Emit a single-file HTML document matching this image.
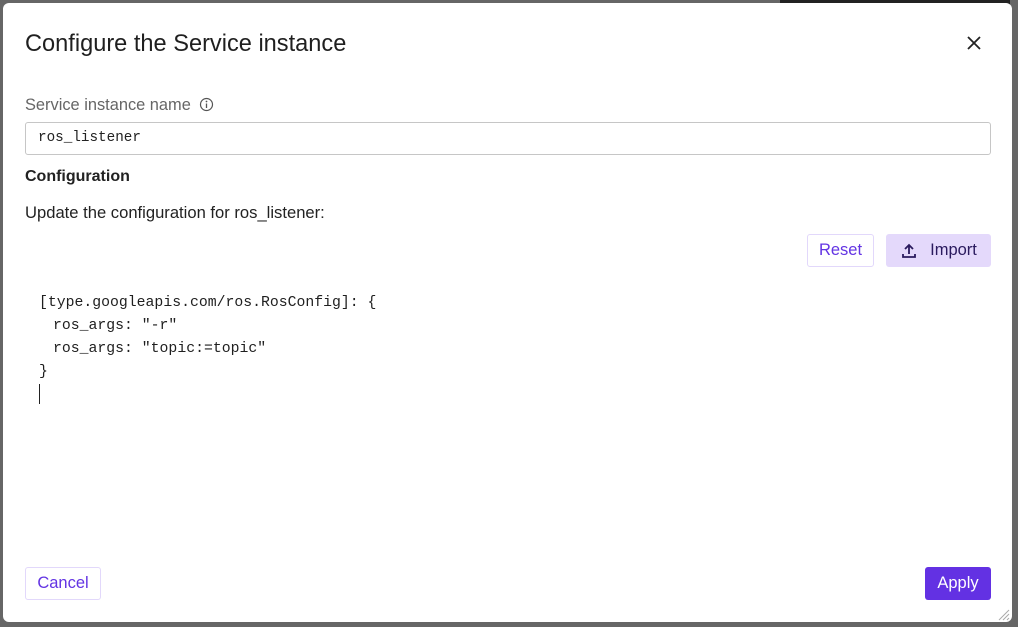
<!DOCTYPE html>
<html><head><meta charset="utf-8"><style>
*{box-sizing:border-box;margin:0;padding:0}
body{width:1018px;height:627px;background:#666;position:relative;overflow:hidden;font-family:"Liberation Sans",sans-serif}
.top{position:absolute;left:780px;top:0;width:230px;height:6px;background:#222}
.dlg{position:absolute;left:3px;top:3px;width:1009px;height:619px;background:#fff;border-radius:6px}
.abs{position:absolute}
.title{left:22px;top:28px;font-size:23.6px;color:#1f1f1f}
.lbl{left:22px;top:93px;font-size:16.4px;color:#666}
.inp{left:22px;top:119px;width:966px;height:33px;border:1px solid #c6c6c6;border-radius:3px;font-family:"Liberation Mono",monospace;font-size:14.3px;color:#222;padding:7px 12px}
.h{left:22px;top:165px;font-size:16px;font-weight:bold;color:#222}
.p{left:22px;top:200px;font-size:16.6px;color:#222}
.btn{height:33px;border-radius:3px;font-size:16.5px;display:flex;align-items:center;justify-content:center}
.code{left:36px;top:289px;font-family:"Liberation Mono",monospace;font-size:14.8px;line-height:23px;color:#1f1f1f;white-space:pre}
.code .i{padding-left:14px}
.caret{left:36px;top:381px;width:1px;height:20px;background:#222}
</style></head><body>
<div class="top"></div>
<div class="dlg">
<div class="abs title">Configure the Service instance</div>
<svg class="abs" style="left:963px;top:32px" width="16" height="16" viewBox="0 0 16 16"><path d="M2 2L14 14M14 2L2 14" stroke="#222" stroke-width="1.8"/></svg>
<div class="abs lbl">Service instance name</div>
<svg class="abs" style="left:196px;top:94px" width="15" height="15" viewBox="0 0 15 15"><circle cx="7.5" cy="7.5" r="6" fill="none" stroke="#555" stroke-width="1.2"/><path d="M7.5 6.5V11" stroke="#555" stroke-width="1.3"/><circle cx="7.5" cy="4.5" r=".9" fill="#555"/></svg>
<div class="abs inp">ros_listener</div>
<div class="abs h">Configuration</div>
<div class="abs p">Update the configuration for ros_listener:</div>
<div class="abs btn" style="left:804px;top:231px;width:67px;border:1px solid #e2d8fb;color:#6334e3">Reset</div>
<div class="abs btn" style="left:883px;top:231px;width:105px;background:#e4d9fb;color:#2a1a5e"><svg width="18" height="18" viewBox="0 0 18 18" style="margin-right:12px"><path d="M9 12V3M5 7l4-4 4 4M3 12v3h12v-3" fill="none" stroke="#2a1a5e" stroke-width="1.8"/></svg>Import</div>
<div class="abs code">[type.googleapis.com/ros.RosConfig]: {
<span class="i">ros_args: "-r"</span>
<span class="i">ros_args: "topic:=topic"</span>
}</div>
<div class="abs caret"></div>
<div class="abs btn" style="left:22px;top:564px;width:76px;border:1px solid #e2d8fb;color:#6334e3">Cancel</div>
<div class="abs btn" style="left:922px;top:564px;width:66px;background:#6331e3;color:#fff">Apply</div>
<svg class="abs" style="left:995px;top:606px" width="12" height="12"><path d="M1 11L11 1M5 11L11 5M9 11L11 9" stroke="#aaa"/></svg>
</div>
</body></html>
